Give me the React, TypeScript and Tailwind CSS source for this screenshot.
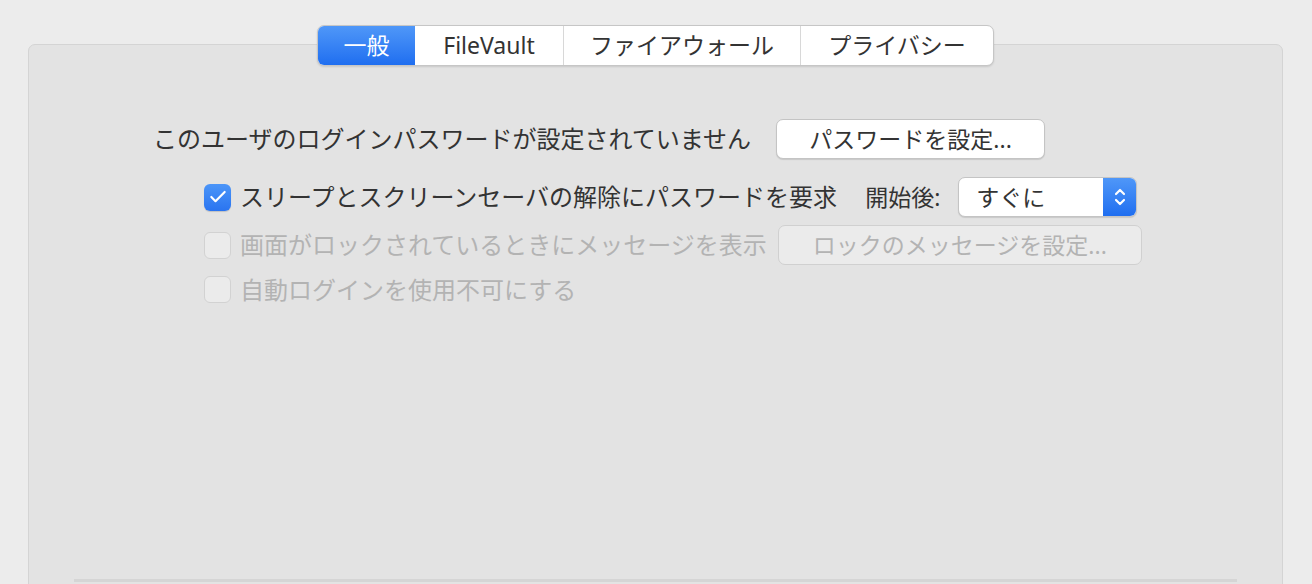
import { Check } from "lucide-react";

// Segmented tab data
const tabs = [
  { label: "一般", width: "w-[97px]", active: true },
  { label: "FileVault", width: "w-[148px]", active: false },
  { label: "ファイアウォール", width: "w-[237px]", active: false },
  { label: "プライバシー", width: "w-[193px]", active: false },
];

const Checkbox = ({ checked, disabled }: { checked?: boolean; disabled?: boolean }) =>
  checked ? (
    <div className="w-[27px] h-[27px] rounded-[6px] bg-gradient-to-b from-[#4b95f8] to-[#2a74f0] flex items-center justify-center shadow-[0_1px_1px_rgba(0,0,0,0.15)]">
      <Check className="w-[20px] h-[20px] text-white" strokeWidth={2.6} />
    </div>
  ) : (
    <div
      className={`w-[27px] h-[27px] rounded-[6px] border ${
        disabled ? "border-[#d2d2d2] bg-[#ebebeb]" : "border-[#bdbdbd] bg-white"
      }`}
    />
  );

export default function App() {
  return (
    <div
      className="w-[1312px] h-[584px] overflow-hidden bg-[#ececec] pl-[28px] pt-[44px] text-[#333]"
      style={{ fontFamily: '"Noto Sans", "Noto Sans CJK JP", sans-serif' }}
    >
      {/* Panel */}
      <div className="w-[1255px] h-[620px] rounded-[7px] border border-[#d4d4d4] bg-[#e3e3e3] flex flex-col">
        {/* Tabs */}
        <div className="-mt-[20px] self-center flex h-[41px] rounded-[7px] border border-[#c6c6c6] bg-white overflow-hidden shadow-[0_1px_2px_rgba(0,0,0,0.12)]">
          {tabs.map((t, i) => (
            <div
              key={t.label}
              className={`${t.width} h-full flex items-center justify-center text-[23px] ${
                t.active
                  ? "bg-gradient-to-b from-[#4f97f8] to-[#1f6ef0] text-white"
                  : "text-[#333]"
              } ${i > 1 ? "border-l border-[#d8d8d8]" : ""}`}
            >
              {t.label}
            </div>
          ))}
        </div>

        {/* Row 1 */}
        <div className="mt-[53px] ml-[124px] flex items-center h-[40px]">
          <span className="text-[24px] leading-none">このユーザのログインパスワードが設定されていません</span>
          <button className="ml-[25px] w-[269px] h-[40px] rounded-[7px] border border-[#c4c4c4] bg-white text-[23px] shadow-[0_1px_1px_rgba(0,0,0,0.12)]">
            パスワードを設定...
          </button>
        </div>

        {/* Row 2 */}
        <div className="mt-[18px] ml-[175px] flex items-center h-[40px]">
          <Checkbox checked />
          <span className="ml-[9px] text-[24px] leading-none">スリープとスクリーンセーバの解除にパスワードを要求</span>
          <span className="ml-[28px] text-[23px] leading-none">開始後:</span>
          <div className="ml-[18px] w-[179px] h-[40px] flex rounded-[7px] border border-[#c4c4c4] bg-white overflow-hidden shadow-[0_1px_1px_rgba(0,0,0,0.12)]">
            <span className="flex-1 pl-[17px] flex items-center text-[23px]">すぐに</span>
            <div className="w-[33px] h-full bg-gradient-to-b from-[#4f97f8] to-[#1f6ef0] flex items-center justify-center">
              <svg width="14" height="22" viewBox="0 0 14 22" fill="none" stroke="white" strokeWidth="2.2" strokeLinecap="round" strokeLinejoin="round">
                <path d="M3 8 L7 4 L11 8" />
                <path d="M3 14 L7 18 L11 14" />
              </svg>
            </div>
          </div>
        </div>

        {/* Row 3 */}
        <div className="mt-[8px] ml-[175px] flex items-center h-[40px] text-[#b3b3b3]">
          <Checkbox disabled />
          <span className="ml-[9px] text-[24px] leading-none">画面がロックされているときにメッセージを表示</span>
          <button className="ml-[11px] w-[364px] h-[40px] rounded-[7px] border border-[#d0d0d0] bg-[#ebebeb] text-[23px] text-[#b3b3b3]">
            ロックのメッセージを設定...
          </button>
        </div>

        {/* Row 4 */}
        <div className="mt-[11px] ml-[175px] flex items-center h-[27px] text-[#b3b3b3]">
          <Checkbox disabled />
          <span className="ml-[9px] text-[24px] leading-none">自動ログインを使用不可にする</span>
        </div>

        {/* Separator */}
        <div className="mt-[276px] mx-[45px] h-[3px] bg-[#d5d5d5]" />
      </div>
    </div>
  );
}
